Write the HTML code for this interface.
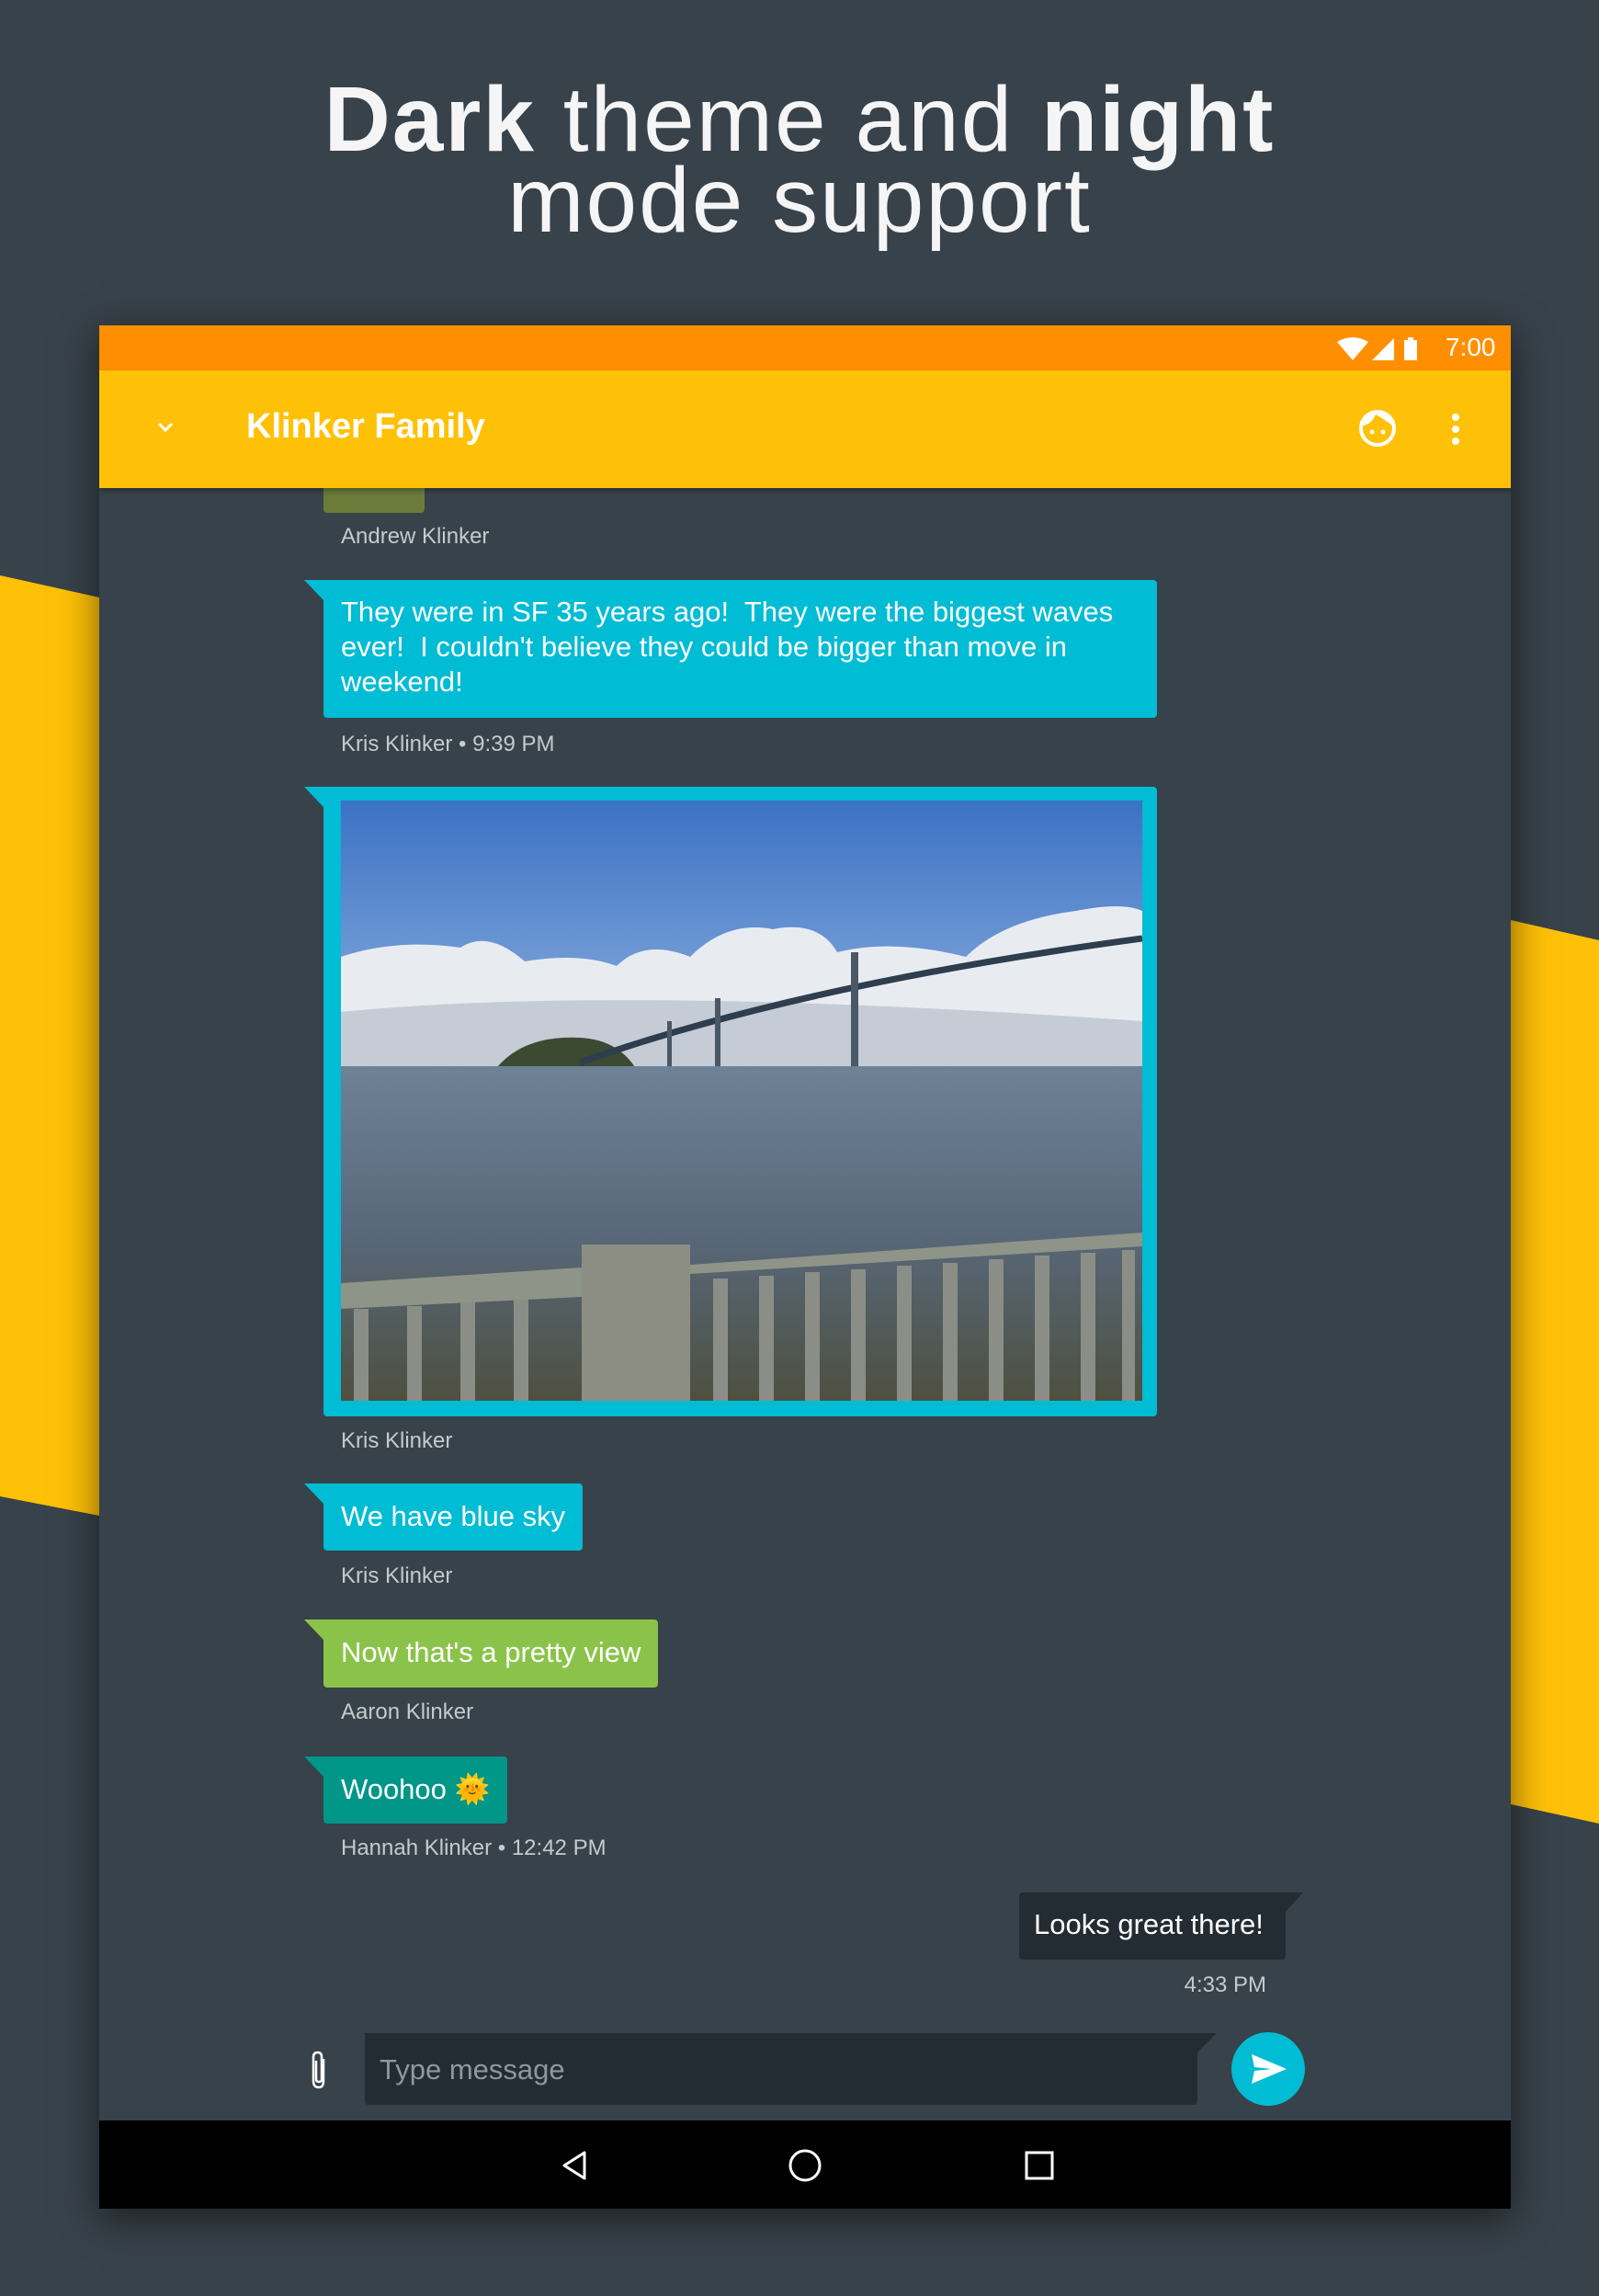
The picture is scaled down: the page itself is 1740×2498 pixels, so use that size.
<!DOCTYPE html>
<html><head><meta charset="utf-8">
<style>
*{margin:0;padding:0;box-sizing:border-box}
body{width:1740px;height:2498px;background:#38424a;position:relative;overflow:hidden;font-family:"Liberation Sans",sans-serif}
.abs{position:absolute}
.title{left:0;width:1740px;text-align:center;color:#f5f5f5;font-size:100px;letter-spacing:2px;line-height:1}
.dev{left:108px;top:354px;width:1536px;height:2049px;background:#37424a;box-shadow:0 10px 40px rgba(0,0,0,.55);overflow:hidden}
.name{color:#c5cacd;font-size:24px;position:absolute;left:263px}
.b{position:absolute;left:244px;color:#fff;font-size:31px;line-height:38px;padding:0 19px;border-radius:0 4px 4px 4px}
.b:before{content:"";position:absolute;left:-21px;top:0;border-top:22px solid;border-left:21px solid transparent;border-top-color:inherit}
</style></head><body>
<div class="abs title" style="top:80px"><b>Dark</b> theme and <b>night</b></div>
<div class="abs title" style="top:168px">mode support</div>
<svg class="abs" style="left:0;top:0" width="1740" height="2498">
<polygon points="0,626 108,650 108,1649 0,1628" fill="#ffc107"/>
<polygon points="1644,1001 1740,1023 1740,1984 1644,1963" fill="#ffc107"/>
</svg>
<div class="abs dev">
 <div class="abs" style="left:0;top:0;width:1536px;height:49px;background:#ff8f00"></div>
 <svg class="abs" style="left:1345px;top:10px" width="120" height="32" viewBox="0 0 120 32">
  <path d="M2 8 Q19 -2 36 8 L19 28 Z" fill="#fff"/>
  <polygon points="40,28 64,4 64,28" fill="#fff"/>
  <rect x="75" y="6" width="14" height="22" fill="#fff"/><rect x="79" y="3" width="6" height="4" fill="#fff"/>
 </svg>
 <div class="abs" style="left:1465px;top:8px;color:#fff;font-size:28px">7:00</div>
 <div class="abs" style="left:0;top:49px;width:1536px;height:128px;background:#ffc107;box-shadow:0 3px 6px rgba(0,0,0,.3);z-index:2">
  <svg class="abs" style="left:60px;top:50px" width="24" height="24" viewBox="0 0 24 24"><path d="M5 8 L12 15 L19 8" stroke="#fff" stroke-width="3" fill="none"/></svg>
  <div class="abs" style="left:160px;top:40px;color:#fff;font-size:38px;font-weight:bold">Klinker Family</div>
  <svg class="abs" style="left:1370px;top:42px" width="42" height="42" viewBox="0 0 42 42"><circle cx="21" cy="21" r="18" stroke="#fff" stroke-width="4" fill="none"/><path d="M5 18 Q14 17 19 6 Q27 10 37 18 L37 12 Q30 3 21 3 Q9 4 5 18Z" fill="#fff"/><circle cx="15" cy="25" r="2.5" fill="#fff"/><circle cx="27" cy="25" r="2.5" fill="#fff"/></svg>
  <svg class="abs" style="left:1466px;top:44px" width="20" height="40"><circle cx="10" cy="7" r="4" fill="#fff"/><circle cx="10" cy="20" r="4" fill="#fff"/><circle cx="10" cy="33" r="4" fill="#fff"/></svg>
 </div>
 <div class="abs" style="left:244px;top:150px;width:110px;height:54px;background:#6b7b3a;border-radius:0 0 4px 4px"></div>
 <div class="name" style="top:216px">Andrew Klinker</div>
 <div class="b" style="top:277px;width:907px;height:150px;background:#00bcd4;border-top-color:#00bcd4;padding-top:16px">They were in SF 35 years ago!&nbsp; They were the biggest waves ever!&nbsp; I couldn't believe they could be bigger than move in weekend!</div>
 <div class="name" style="top:442px">Kris Klinker • 9:39 PM</div>
 <div class="b" style="top:502px;width:907px;height:685px;background:#00bcd4;border-top-color:#00bcd4;padding:0">
  <svg class="abs" style="left:19px;top:15px" width="872" height="653" viewBox="0 0 872 653" preserveAspectRatio="none">
   <defs>
    <linearGradient id="sky" x1="0" y1="0" x2="0" y2="1"><stop offset="0" stop-color="#3c72c4"/><stop offset="1" stop-color="#8fb2de"/></linearGradient>
    <linearGradient id="wat" x1="0" y1="0" x2="0" y2="1"><stop offset="0" stop-color="#6e8296"/><stop offset="0.5" stop-color="#58687a"/><stop offset="1" stop-color="#4e5040"/></linearGradient>
   </defs>
   <rect width="872" height="289" fill="url(#sky)"/>
   <path d="M0 170 Q60 150 130 160 Q160 140 200 175 Q260 165 300 180 Q330 150 380 170 Q420 130 470 140 Q520 130 540 165 Q600 150 680 170 Q720 130 800 120 Q850 110 872 120 L872 289 L0 289 Z" fill="#e8ecf1"/>
   <path d="M0 230 Q300 200 872 240 L872 289 L0 289Z" fill="#c5ccd6"/>
   <path d="M170 290 Q200 255 260 258 Q300 260 320 290Z" fill="#3c4a32"/>
   <path d="M260 285 Q500 200 872 150" stroke="#2e3e4e" stroke-width="7" fill="none"/>
   <rect x="555" y="165" width="8" height="125" fill="#4a5866"/><rect x="407" y="215" width="6" height="75" fill="#4a5866"/><rect x="355" y="240" width="5" height="50" fill="#4a5866"/>
   <rect x="0" y="289" width="872" height="364" fill="url(#wat)"/>
   <path d="M0 525 L262 508 L262 485 L380 483 L380 505 L872 470 L872 485 L380 515 L380 653 L262 653 L262 540 L0 553Z" fill="#8e9488"/>
   <rect x="262" y="483" width="118" height="170" fill="#8c8e84"/>
   <g fill="#8a8e86">
    <rect x="14" y="553" width="16" height="100"/><rect x="72" y="550" width="16" height="103"/><rect x="130" y="546" width="16" height="107"/><rect x="188" y="543" width="16" height="110"/>
    <rect x="405" y="520" width="16" height="133"/><rect x="455" y="517" width="16" height="136"/><rect x="505" y="513" width="16" height="140"/><rect x="555" y="510" width="16" height="143"/><rect x="605" y="506" width="16" height="147"/><rect x="655" y="503" width="16" height="150"/><rect x="705" y="499" width="16" height="154"/><rect x="755" y="495" width="16" height="158"/><rect x="805" y="492" width="16" height="161"/><rect x="850" y="489" width="14" height="164"/>
   </g>
  </svg>
 </div>
 <div class="name" style="top:1200px">Kris Klinker</div>
 <div class="b" style="top:1260px;height:73px;padding-top:17px;background:#00bcd4;border-top-color:#00bcd4">We have blue sky</div>
 <div class="name" style="top:1347px">Kris Klinker</div>
 <div class="b" style="top:1408px;height:74px;padding-top:17px;background:#8bc34a;border-top-color:#8bc34a">Now that's a pretty view</div>
 <div class="name" style="top:1495px">Aaron Klinker</div>
 <div class="b" style="top:1557px;height:73px;padding-top:17px;background:#009688;border-top-color:#009688">Woohoo <span style="color:#ffc107">🌞</span></div>
 <div class="name" style="top:1643px">Hannah Klinker • 12:42 PM</div>
 <div class="abs" style="left:1001px;top:1705px;width:290px;height:73px;background:#222c32;border-radius:4px 0 4px 4px;color:#fff;font-size:31px;padding:17px 0 0 16px">Looks great there!</div>
 <svg class="abs" style="left:1290px;top:1705px" width="20" height="22"><polygon points="0,0 20,0 0,22" fill="#222c32"/></svg>
 <div class="abs" style="left:1070px;top:1792px;width:200px;text-align:right;white-space:nowrap;color:#c5cacd;font-size:24px">4:33 PM</div>
 <svg class="abs" style="left:228px;top:1876px" width="22" height="44" viewBox="0 0 22 44"><path d="M16 10 L16 34 Q16 41 11 41 Q5 41 5 34 L5 8 Q5 3 10 3 Q14 3 14 8 L14 32 Q14 35 11 35 Q8 35 8 32 L8 12" stroke="#fff" stroke-width="2.5" fill="none"/></svg>
 <div class="abs" style="left:289px;top:1858px;width:906px;height:78px;background:#222c32;border-radius:0 0 4px 4px;color:#8e979c;font-size:31px;padding:22px 0 0 16px">Type message</div>
 <svg class="abs" style="left:1194px;top:1858px" width="22" height="22"><polygon points="0,0 22,0 0,22" fill="#222c32"/></svg>
 <svg class="abs" style="left:1232px;top:1857px" width="80" height="80" viewBox="0 0 80 80"><circle cx="40" cy="40" r="40" fill="#00bcd4"/><polygon points="22,24 60,40 22,56 25,42 44,40 25,38" fill="#fff"/></svg>
 <div class="abs" style="left:0;top:1953px;width:1536px;height:96px;background:#000">
  <svg class="abs" style="left:0;top:0" width="1536" height="96">
   <polygon points="528,35 528,63 506,49" stroke="#fff" stroke-width="3" fill="none" stroke-linejoin="round"/>
   <circle cx="768" cy="49" r="16" stroke="#fff" stroke-width="3" fill="none"/>
   <rect x="1009" y="35" width="28" height="28" stroke="#fff" stroke-width="3" fill="none"/>
  </svg>
 </div>
</div>
</body></html>
